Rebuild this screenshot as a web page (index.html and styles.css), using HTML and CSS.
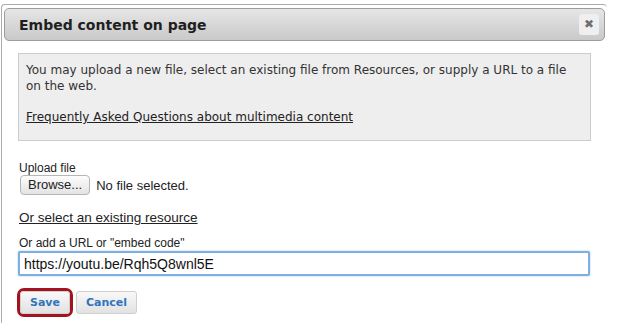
FILE: index.html
```html
<!DOCTYPE html>
<html lang="en">
<head>
    <meta charset="UTF-8">
    <meta name="viewport" content="width=device-width, initial-scale=1.0">
    <title>Embed content on page</title>
    <link rel="stylesheet" href="styles.css">
</head>
<body>
    <div class="dialog">
        <div class="dialog-header">
            <h1>Embed content on page</h1>
            <button class="close-btn" title="Close">&#10006;</button>
        </div>

        <div class="dialog-body">
            <div class="info-box">
                <p>You may upload a new file, select an existing file from Resources, or supply a URL to a file on the web.</p>
                <p class="faq"><a href="#">Frequently Asked Questions about multimedia content</a></p>
            </div>

            <div class="form-group upload-group">
                <label for="upload">Upload file</label>
                <div class="file-row">
                    <span class="browse-btn">Browse...</span>
                    <span class="file-name">No file selected.</span>
                </div>
            </div>

            <p class="resource-link"><a href="#">Or select an existing resource</a></p>

            <div class="form-group url-group">
                <label for="url">Or add a URL or "embed code"</label>
                <input type="text" id="url" value="https://youtu.be/Rqh5Q8wnl5E">
            </div>

            <div class="actions">
                <span class="highlight"><button class="btn">Save</button></span>
                <button class="btn">Cancel</button>
            </div>
        </div>
    </div>
</body>
</html>
```

FILE: styles.css
```css
body {
    margin: 0;
    background: white;
    font-family: 'Liberation Sans', Arial, sans-serif;
    color: #222;
}
.dialog {
    margin: 4px 0 0 1px;
    width: 601px;
    height: 315px;
    padding: 3px 2px 0 2px;
    border-top: 1px solid #ababab;
    border-left: 1px solid #ababab;
    border-top-left-radius: 4px;
    border-top-right-radius: 4px;
}
.dialog-header {
    display: flex;
    align-items: center;
    justify-content: space-between;
    height: 31px;
    padding: 0 5px 0 14px;
    border: 1px solid #9c9c9c;
    border-radius: 5px;
    background: linear-gradient(#e6e6e6, #c9c9c9);
}
h1 {
    margin: 0;
    font-family: 'DejaVu Sans', Verdana, sans-serif;
    font-size: 14px;
    font-weight: bold;
    color: #1f1f1f;
}
.close-btn {
    width: 20px;
    height: 21px;
    padding: 0;
    border: none;
    border-radius: 3px;
    background: #efefef;
    color: #6f6f6f;
    font-size: 12px;
    line-height: 21px;
    cursor: pointer;
}
.dialog-body {
    padding: 12px 14px 0 14px;
}
.info-box {
    padding: 0 7px;
    background: #eeeeee;
    border: 1px solid #cccccc;
    font-family: 'DejaVu Sans', Verdana, sans-serif;
    font-size: 12px;
    line-height: 16px;
    color: #333;
}
.info-box p {
    margin: 8px 0 0;
}
.info-box .faq {
    margin: 15px 0 15px;
}
.info-box a,
.resource-link a {
    color: #222;
}
.form-group {
    font-size: 12px;
}
.upload-group {
    margin-top: 20px;
}
.url-group {
    margin-top: 10px;
}
label {
    display: block;
    margin-left: 1px;
    line-height: 15px;
}
.file-row {
    display: flex;
    align-items: center;
    gap: 6px;
    margin: -1px 0 0 2px;
}
.browse-btn {
    display: inline-block;
    padding: 0 7px;
    height: 18px;
    line-height: 18px;
    font-size: 13px;
    border: 1px solid #b5b5b5;
    border-radius: 4px;
    background: linear-gradient(#fdfdfd, #e3e3e3);
}
.file-name {
    font-size: 13px;
}
.resource-link {
    margin: 15px 0 0 1px;
    font-size: 13.5px;
    line-height: 16px;
}
input {
    box-sizing: border-box;
    width: 572px;
    height: 25px;
    margin-top: 0;
    padding: 0 4px;
    border: 2px solid #7eaee2;
    border-radius: 2px;
    box-shadow: 0 0 2px #9cc3ec;
    font-family: 'Liberation Sans', Arial, sans-serif;
    font-size: 14px;
    color: #111;
    outline: none;
}
.actions {
    display: flex;
    align-items: center;
    gap: 6px;
    margin-top: 15px;
    margin-left: 2px;
}
.highlight {
    display: inline-flex;
    margin: -3px;
    border: 3px solid #a3131d;
    border-radius: 7px;
}
.btn {
    height: 23px;
    padding: 0 9px;
    border: 1px solid #cfcfcf;
    border-radius: 3px;
    background: linear-gradient(#f8f8f8, #e2e2e2);
    font-family: 'DejaVu Sans', Verdana, sans-serif;
    font-size: 11px;
    font-weight: bold;
    color: #2f74bd;
    cursor: pointer;
}
```
